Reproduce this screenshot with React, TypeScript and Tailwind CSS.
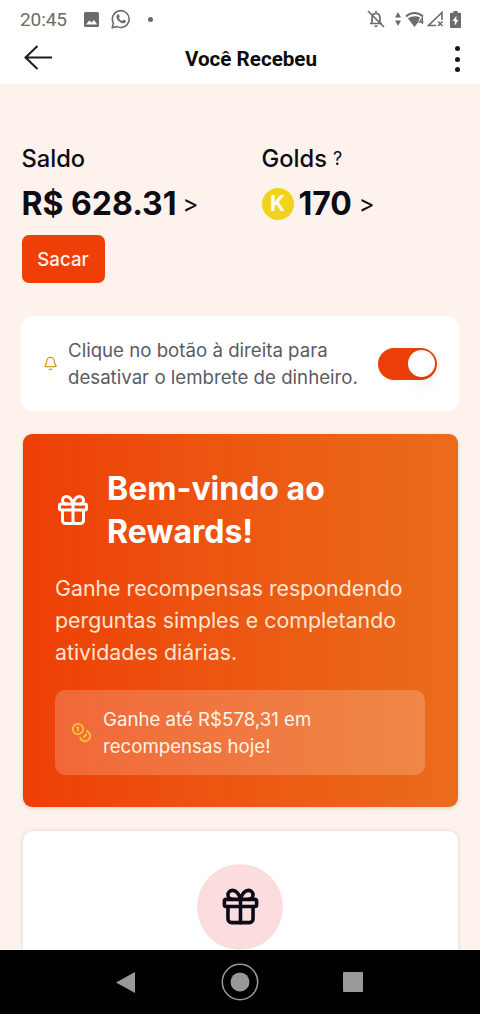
import type { ReactNode } from "react";
import { Bell, Coins, Gift } from "lucide-react";

function StatusBar() {
  return (
    <div className="flex h-[38px] items-center justify-between pl-5 pr-[19px] text-[#6b6b6b]">
      <div className="flex items-center">
        <span className="w-[47px] font-[Roboto] text-[19px] leading-none tracking-[-0.1px]">20:45</span>
        <svg className="ml-[17px] h-[15px] w-[15px]" viewBox="0 0 15 15" fill="currentColor">
          <path
            fillRule="evenodd"
            d="M1.500 0h12A1.500 1.500 0 0 1 15 1.500v12a1.500 1.500 0 0 1-1.500 1.500h-12A1.500 1.500 0 0 1 0 13.500v-12A1.500 1.500 0 0 1 1.500 0ZM2 12.500h11.200L10 8 7.600 10.500 5.300 8.600Z"
          />
        </svg>
        <svg className="ml-[12px] h-[20px] w-[20px]" viewBox="0 0 20 20" fill="none">
          <path
            d="M1.200 18.800l1.300-4.500A8.400 8.400 0 1 1 6 17.600Z"
            stroke="currentColor"
            strokeWidth="1.600"
            strokeLinejoin="round"
          />
          <path
            d="M6.800 5.300c.5-.2 1-.1 1.200.4l.7 1.600c.1.300 0 .600-.2.900l-.7.900c.8 1.400 1.800 2.300 3.300 3l.9-1.100c.2-.300.500-.300.800-.200l1.700.8c.4.200.5.500.3 1-.4 1.200-1.700 1.800-2.900 1.600-3.400-.6-6-3.300-6.400-6-.100-1.200.4-2.300 1.300-2.900Z"
            fill="currentColor"
          />
        </svg>
        <span className="ml-[17px] h-[5px] w-[5px] rounded-full bg-[#6b6b6b]" />
      </div>

      <div className="flex items-center">
        <svg className="h-[18px] w-[18px]" viewBox="0 0 18 18" fill="none" stroke="currentColor" strokeWidth="1.700">
          <path d="M5 13V8c0-2.700 1.600-4.500 4-4.500s4 1.800 4 4.500v5M3 13.500h12M9 1v2.500M1 1l16 16" />
          <path d="M7.500 16.200h3" />
        </svg>
        <svg className="ml-[10px] h-[14px] w-[6px]" viewBox="0 0 6 14" fill="currentColor">
          <path d="M3 0l3 5.500H0ZM3 14L0 8.500h6Z" />
        </svg>
        <svg className="ml-[4px] h-[17px] w-[19px]" viewBox="0 0 19 17">
          <path d="M1 5.500C6 .8 13 .8 18 5.500" fill="none" stroke="currentColor" strokeWidth="1.800" />
          <path d="M2.800 7.300C7 4.600 12 4.600 15 6.500L13 11.500 9.500 16Z" fill="currentColor" />
          <path d="M17.300 13V7L14.500 11H18.500" fill="none" stroke="currentColor" strokeWidth="1.300" />
        </svg>
        <svg className="ml-[3px] h-[16px] w-[17px]" viewBox="0 0 17 16" fill="none" stroke="currentColor" strokeWidth="1.600">
          <path d="M9 14.500H1.500L15 1.500V9M11 10.500l4.500 4.500M15.500 10.500L11 15" />
        </svg>
        <svg className="ml-[6px] h-[17px] w-[11px]" viewBox="0 0 11 17" fill="currentColor">
          <path
            fillRule="evenodd"
            d="M3.500 0h4v1.700H10a1 1 0 0 1 1 1V16a1 1 0 0 1-1 1H1a1 1 0 0 1-1-1V2.700a1 1 0 0 1 1-1h2.500ZM6.500 4.500L2.500 10h2.300v4.500L8.500 8.700H6.300Z"
          />
        </svg>
      </div>
    </div>
  );
}

function TitleBar() {
  return (
    <div className="flex h-[46px] items-start justify-between pr-[20px] pl-[24px]">
      <svg className="mt-[7px] h-[25px] w-[28px]" viewBox="0 0 28 25" fill="none" stroke="#1c1c1c" strokeWidth="2">
        <path d="M13.500 1L1.500 12.500l12 11.500M1.500 12.500H28" />
      </svg>
      <h1 className="-ml-[5px] pt-[7px] font-[Roboto] text-[20.600px] font-bold leading-7 whitespace-nowrap text-[#0c0c0c]">
        Você Recebeu
      </h1>
      <div className="mt-[8px] flex flex-col gap-[5.500px]">
        <span className="h-[5px] w-[5px] rounded-full bg-[#151515]" />
        <span className="h-[5px] w-[5px] rounded-full bg-[#151515]" />
        <span className="h-[5px] w-[5px] rounded-full bg-[#151515]" />
      </div>
    </div>
  );
}

function Balance({ label, children }: { label: ReactNode; children: ReactNode }) {
  return (
    <div>
      <p className="flex h-[37px] items-center text-[23.700px] font-medium">{label}</p>
      <div className="mt-[5px] flex h-[43px] items-center">{children}</div>
    </div>
  );
}

function Balances() {
  return (
    <section className="grid grid-cols-2 px-[21.500px] pt-[56px]">
      <div>
        <Balance label="Saldo">
          <span className="text-[32px] font-bold">R$ 628.31</span>
          <span className="ml-[6px] text-[24px]">&gt;</span>
        </Balance>
        <button className="mt-[10px] flex h-[48px] w-[83px] items-center justify-center rounded-[7px] bg-[#ef3f06] pt-[2px] text-[18.670px] font-medium text-[#fff3ea]">
          Sacar
        </button>
      </div>
      <div className="pl-[21.500px]">
        <Balance
          label={
            <>
              Golds <span className="ml-[6px] text-[18px] font-normal">?</span>
            </>
          }
        >
          <span className="flex h-8 w-8 items-center justify-center rounded-full bg-[#f3d21c] text-[21px] font-bold text-white">
            K
          </span>
          <span className="ml-[5px] text-[32px] font-bold tracking-[-0.1px]">170</span>
          <span className="ml-[7px] text-[24px]">&gt;</span>
        </Balance>
      </div>
    </section>
  );
}

function ReminderCard() {
  return (
    <section className="mx-[21px] mt-[33px] flex h-[95px] items-center rounded-[11px] bg-white px-[22px]">
      <Bell className="h-[15px] w-[15px] shrink-0 text-[#cf9a1c]" />
      <p className="ml-[10px] flex-1 pt-[2px] text-[18.670px] leading-[26.670px] whitespace-nowrap text-[#5b5b63]">
        Clique no botão à direita para
        <br />
        desativar o lembrete de dinheiro.
      </p>
      <div className="flex h-8 w-[59px] shrink-0 items-center justify-end rounded-full bg-[#ec3f08] pr-[2.500px]">
        <span className="h-[27px] w-[27px] rounded-full bg-white shadow-[0_12px_16px_rgba(0,0,0,0.04)]" />
      </div>
    </section>
  );
}

function WelcomeCard() {
  return (
    <section className="mx-[22.500px] mt-[23px] h-[373px] rounded-[9px] bg-linear-to-r from-[#ee3e05] to-[#ea6c1b] px-[32.500px] pt-[32px] shadow-[0_1px_4px_rgba(0,0,0,0.15)]">
      <div className="flex items-center text-white">
        <Gift className="h-9 w-9 shrink-0" />
        <h2 className="ml-[16px] pt-[2px] text-[32px] leading-[42.700px] font-bold">
          Bem-vindo ao
          <br />
          Rewards!
        </h2>
      </div>
      <p className="mt-[19px] text-[21.330px] leading-8 whitespace-nowrap text-[#ffe5d5]">
        Ganhe recompensas respondendo
        <br />
        perguntas simples e completando
        <br />
        atividades diárias.
      </p>
      <div className="mt-[22px] flex h-[85px] items-center rounded-[10px] bg-white/20 pl-4">
        <Coins className="h-[21px] w-[21px] shrink-0 text-[#fbc638]" />
        <p className="ml-[11px] pt-[2px] text-[18.670px] leading-[26.670px] text-[#fff3e9]">
          Ganhe até R$578,31 em
          <br />
          recompensas hoje!
        </p>
      </div>
    </section>
  );
}

function GiftCard() {
  return (
    <section className="mx-[22.500px] mt-6 flex h-[240px] justify-center rounded-[10px] bg-white pt-[33px] shadow-[0_0_4px_rgba(40,30,60,0.14)]">
      <div className="flex h-[86px] w-[86px] items-center justify-center rounded-full bg-[#fbdde0] pb-[2px]">
        <Gift className="h-[43px] w-[43px] text-[#0c0a16]" />
      </div>
    </section>
  );
}

function NavBar() {
  return (
    <nav className="flex h-16 items-center justify-between bg-black pr-[117px] pl-[116px] text-[#999]">
      <svg className="h-[21px] w-[19px]" viewBox="0 0 19 21" fill="currentColor">
        <path d="M0 10.500L19 0v21Z" />
      </svg>
      <svg className="ml-[2px] h-[38px] w-[38px]" viewBox="0 0 38 38">
        <circle cx="19" cy="19" r="17.700" fill="none" stroke="currentColor" strokeWidth="1.500" />
        <circle cx="19" cy="19" r="9.500" fill="currentColor" />
      </svg>
      <span className="h-5 w-5 rounded-[1px] bg-[#999]" />
    </nav>
  );
}

export default function App() {
  return (
    <div className="flex h-[1014px] w-[480px] flex-col overflow-hidden bg-white font-[Inter,sans-serif] text-[#0d0b14]">
      <header className="shrink-0">
        <StatusBar />
        <TitleBar />
      </header>
      <main className="min-h-0 flex-1 overflow-hidden bg-[#fdf3ec]">
        <Balances />
        <ReminderCard />
        <WelcomeCard />
        <GiftCard />
      </main>
      <NavBar />
    </div>
  );
}
